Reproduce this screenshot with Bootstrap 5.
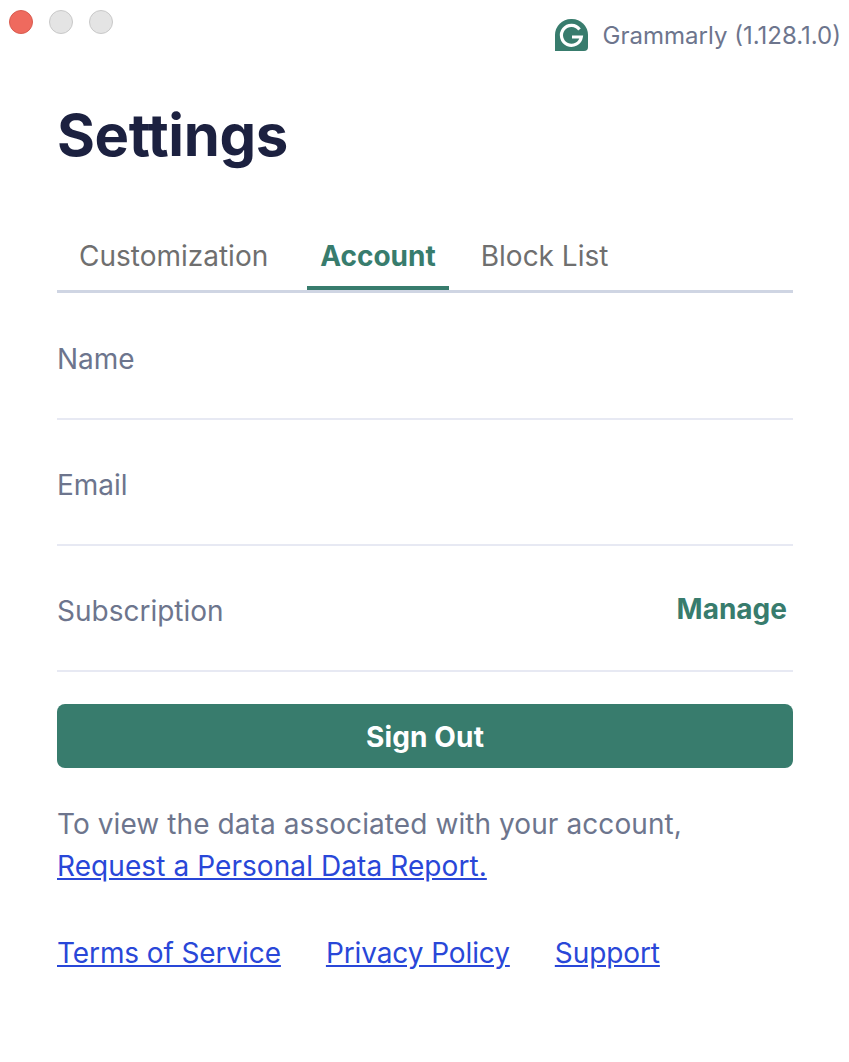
<!DOCTYPE html>
<html><head><meta charset="utf-8">
<link href="https://cdn.jsdelivr.net/npm/bootstrap@5.3.0/dist/css/bootstrap.min.css" rel="stylesheet">
<style>
html,body{height:100%;background:#fff}
body{font-family:Inter,"Liberation Sans",sans-serif;color:#6d758d;font-size:28px;line-height:42px}
.topbar{height:66px}
.dots{padding:10px 0 0 9px;gap:16px}
.dot{width:24px;height:24px;border-radius:50%;background:#e4e4e4;border:1px solid #c9c9c9}
.dot-red{background:#ef6a5e;border-color:#d95c50}
.appname{padding:11px 8px 0 0;font-size:24px;gap:15px;line-height:50px}
.appname svg{margin-top:8px}
.wrap{padding:0 56px 0 57px}
.title{font-size:58px;font-weight:700;color:#1c2140;line-height:68px;margin:35px 0 0;letter-spacing:-.4px}
.tabsrow{margin-top:51px;height:73px;border-bottom:3px solid #cfd5e3}
.tabitem{color:#6f6f6f;padding:0 13px;line-height:72px;height:70px}
.tabitem.on{font-weight:700;color:#387c6d;border-bottom:4px solid #387c6d}
.first{padding-left:22px;margin-right:26px}
.fieldrow{height:126px;border-bottom:2px solid #e7e9f3;padding-top:44px}
.fieldrow.top-row{height:127px;padding-top:45px}
.manage{font-weight:700;color:#387c6d;padding-right:6px;margin-top:-2px}
.signout{background:#387c6d;color:#fff;font-weight:700;font-size:28px;height:64px;border-radius:8px;margin-top:32px;border:0;line-height:66px;padding:0;letter-spacing:.15px}
.signout:hover{background:#387c6d;color:#fff}
.note{margin-top:35px;letter-spacing:.08px}
.note a,.links a{color:#2947d8}
.links{margin-top:45px;gap:45px;letter-spacing:-.1px}
</style></head>
<body>
<div class="topbar d-flex justify-content-between">
<div class="dots d-flex"><span class="dot dot-red"></span><span class="dot"></span><span class="dot"></span></div>
<div class="appname d-flex"><svg width="33" height="32" viewBox="0 0 33 32"><path d="M0 16A16 16 0 0 1 16 0h1a16 16 0 0 1 16 16v12a4 4 0 0 1-4 4H0z" fill="#387c6d"/><path d="M24.500 10.500A10 10 0 1 0 26.300 18H17" fill="none" stroke="#fff" stroke-width="3.200"/></svg><span>Grammarly (1.128.1.0)</span></div>
</div>
<div class="wrap">
<h1 class="title">Settings</h1>
<div class="tabsrow d-flex">
<div class="tabitem first">Customization</div>
<div class="tabitem on">Account</div>
<div class="tabitem ms-4 ps-2">Block List</div>
</div>
<div class="fieldrow top-row">Name</div>
<div class="fieldrow">Email</div>
<div class="fieldrow d-flex justify-content-between"><span>Subscription</span><span class="manage">Manage</span></div>
<button class="btn signout w-100 d-block">Sign Out</button>
<div class="note">To view the data associated with your account,<br><a href="#">Request a Personal Data Report.</a></div>
<div class="links d-flex"><a href="#">Terms of Service</a><a href="#">Privacy Policy</a><a href="#">Support</a></div>
</div>
</body></html>
